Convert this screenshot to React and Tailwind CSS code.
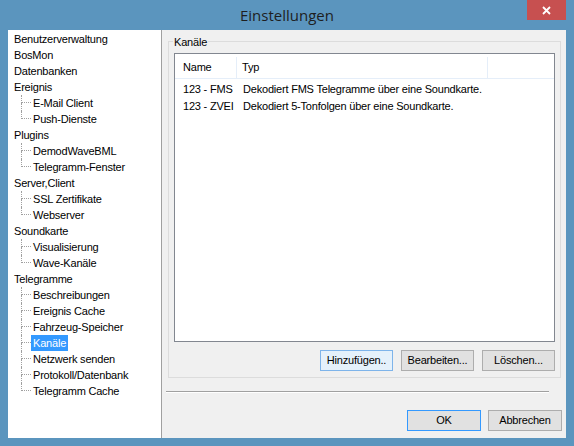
import React from 'react';

const treeData = [
  { label: 'Benutzerverwaltung' },
  { label: 'BosMon' },
  { label: 'Datenbanken' },
  { label: 'Ereignis', children: ['E-Mail Client', 'Push-Dienste'] },
  { label: 'Plugins', children: ['DemodWaveBML', 'Telegramm-Fenster'] },
  { label: 'Server,Client', children: ['SSL Zertifikate', 'Webserver'] },
  { label: 'Soundkarte', children: ['Visualisierung', 'Wave-Kanäle'] },
  {
    label: 'Telegramme',
    children: [
      'Beschreibungen',
      'Ereignis Cache',
      'Fahrzeug-Speicher',
      'Kanäle',
      'Netzwerk senden',
      'Protokoll/Datenbank',
      'Telegramm Cache',
    ],
  },
];

const channels = [
  { name: '123 - FMS', type: 'Dekodiert FMS Telegramme über eine Soundkarte.' },
  { name: '123 - ZVEI', type: 'Dekodiert 5-Tonfolgen über eine Soundkarte.' },
];

const selected = 'Kanäle';

const TreeLabel = ({ text }) => (
  <span
    className={
      'h-4 px-[2px] leading-4 whitespace-nowrap ' +
      (text === selected ? 'bg-[#3399ff] text-white' : 'text-black')
    }
  >
    {text}
  </span>
);

const TreeChild = ({ text, last }) => (
  <div className="flex h-4">
    <div className="ml-[13px] flex w-[10px] flex-col">
      <div className="h-[8px] border-b border-l border-dotted border-[#a0a0a0]" />
      {!last && <div className="flex-1 border-l border-dotted border-[#a0a0a0]" />}
    </div>
    <TreeLabel text={text} />
  </div>
);

const Button = ({ children, variant }) => {
  const look =
    variant === 'hover'
      ? 'border-[#7eb4ea] bg-[#e5f1fb]'
      : variant === 'default'
        ? 'border-[#3399ff] bg-[#e1e1e1]'
        : 'border-[#adadad] bg-[#e1e1e1]';
  return (
    <button className={`h-[21px] border text-[11px] text-black ${look} ${variant === 'default' || variant === 'dialog' ? 'w-[74px]' : 'w-[73px]'}`}>
      {children}
    </button>
  );
};

export default function App() {
  return (
    <div
      className="flex h-[446px] w-[574px] flex-col bg-[#5b95be]"
      style={{ fontFamily: '"Liberation Sans", Arial, sans-serif' }}
    >
      {/* title bar */}
      <div className="relative flex h-[30px] items-center justify-center">
        <span
          className="text-[15px] text-[#1e1e1e]"
          style={{ fontFamily: '"Open Sans", "Noto Sans", sans-serif' }}
        >
          Einstellungen
        </span>
        <div className="absolute right-[8px] top-0 flex h-[20px] w-[39px] items-center justify-center bg-[#c75050]">
          <svg width="9" height="9" viewBox="0 0 9 9">
            <path d="M1 1L8 8M8 1L1 8" stroke="#fff" strokeWidth="1.8" />
          </svg>
        </div>
      </div>

      <div className="mx-[8px] mb-[8px] flex flex-1 text-[11px] tracking-[-0.2px]">
        {/* settings tree */}
        <div className="w-[154px] border-r border-[#a0a0a0] bg-white pt-[1px]">
          {treeData.map((node) => (
            <div key={node.label}>
              <div className="flex h-4 pl-[4px]">
                <TreeLabel text={node.label} />
              </div>
              {node.children &&
                node.children.map((c, i) => (
                  <TreeChild key={c} text={c} last={i === node.children.length - 1} />
                ))}
            </div>
          ))}
        </div>

        {/* page */}
        <div className="flex flex-1 flex-col bg-[#f0f0f0]">
          <div className="relative ml-[6px] mr-[5px] mt-[11px] flex h-[337px] flex-col border border-[#dcdcdc] px-[5px] pt-[11px]">
            <span className="absolute left-[4px] top-[-8px] bg-[#f0f0f0] px-[1px] leading-4 text-black">
              Kanäle
            </span>
            <div className="flex h-[289px] flex-col border border-[#828790] bg-white">
              <div className="flex h-[25px] border-b border-[#e5eef9] pt-[3px]">
                <div className="flex w-[62px] items-center border-r border-[#e5eef9] pl-[8px]">Name</div>
                <div className="flex w-[251px] items-center border-r border-[#e5eef9] pl-[5px]">Typ</div>
              </div>
              <div className="pt-[2px]">
                {channels.map((ch) => (
                  <div key={ch.name} className="flex h-[17px] items-center">
                    <div className="w-[63px] pl-[8px] whitespace-nowrap">{ch.name}</div>
                    <div className="pl-[5px] whitespace-nowrap">{ch.type}</div>
                  </div>
                ))}
              </div>
            </div>
            <div className="mt-[8px] flex justify-end gap-[8px]">
              <Button variant="hover">Hinzufügen..</Button>
              <Button>Bearbeiten...</Button>
              <Button>Löschen...</Button>
            </div>
          </div>

          <div className="ml-[4px] mr-[17px] mt-[13px] h-[2px] border-t border-[#a0a0a0] bg-white" />

          <div className="mr-[4px] mt-[17px] flex justify-end gap-[7px]">
            <Button variant="default">OK</Button>
            <Button variant="dialog">Abbrechen</Button>
          </div>
        </div>
      </div>
    </div>
  );
}
